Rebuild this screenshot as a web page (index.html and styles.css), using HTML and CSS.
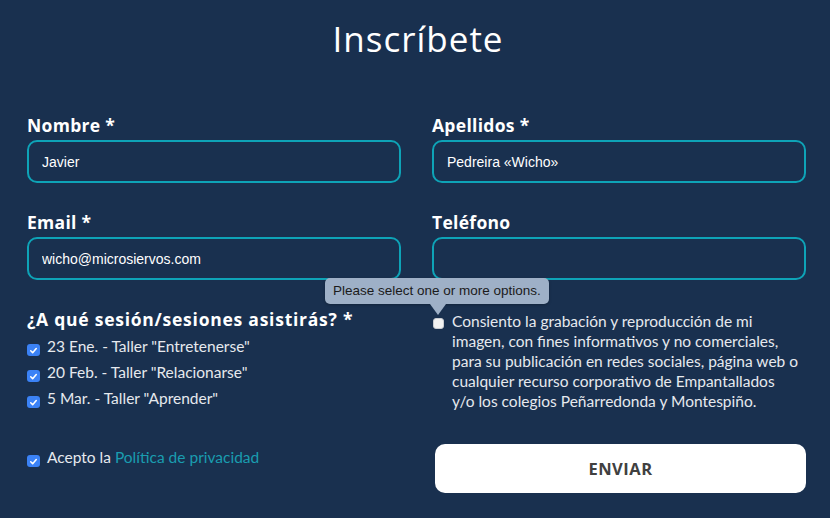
FILE: index.html
```html
<!DOCTYPE html>
<html lang="es">
<head>
<meta charset="utf-8">
<title>Inscríbete</title>
<link rel="stylesheet" href="styles.css">
</head>
<body>
<main class="form">
  <h1 class="title">Inscríbete</h1>

  <div class="grid fields">
    <div class="field">
      <label class="label">Nombre *</label>
      <input class="input" type="text" value="Javier" readonly>
    </div>
    <div class="field">
      <label class="label">Apellidos *</label>
      <input class="input" type="text" value="Pedreira «Wicho»" readonly>
    </div>
    <div class="field">
      <label class="label">Email *</label>
      <input class="input" type="text" value="wicho@microsiervos.com" readonly>
    </div>
    <div class="field">
      <label class="label">Teléfono</label>
      <input class="input" type="text" value="" readonly>
    </div>
  </div>

  <div class="grid options">
    <div class="sessions">
      <div class="heading">¿A qué sesión/sesiones asistirás? *</div>
      <ul class="checks">
        <li class="check"><span class="box on"><svg viewBox="0 0 12 12"><path d="M3 6.3 L5.1 8.4 L9 3.8" /></svg></span><span>23 Ene. - Taller "Entretenerse"</span></li>
        <li class="check"><span class="box on"><svg viewBox="0 0 12 12"><path d="M3 6.3 L5.1 8.4 L9 3.8" /></svg></span><span>20 Feb. - Taller "Relacionarse"</span></li>
        <li class="check"><span class="box on"><svg viewBox="0 0 12 12"><path d="M3 6.3 L5.1 8.4 L9 3.8" /></svg></span><span>5 Mar. - Taller "Aprender"</span></li>
      </ul>
    </div>
    <div class="consent">
      <span class="box-wrap">
        <span class="box off"></span>
        <span class="tooltip">Please select one or more options.</span>
      </span>
      <p class="consent-text">Consiento la grabación y reproducción de mi<br>imagen, con fines informativos y no comerciales,<br>para su publicación en redes sociales, página web o<br>cualquier recurso corporativo de Empantallados<br>y/o los colegios Peñarredonda y Montespiño.</p>
    </div>
  </div>

  <div class="grid footer">
    <div class="check privacy"><span class="box on"><svg viewBox="0 0 12 12"><path d="M3 6.3 L5.1 8.4 L9 3.8" /></svg></span><span>Acepto la <a class="link" href="#">Política de privacidad</a></span></div>
    <button class="submit" type="button">ENVIAR</button>
  </div>
</main>
</body>
</html>
```

FILE: styles.css
```css
* { box-sizing: border-box; }

html, body {
  margin: 0;
  padding: 0;
  background: #19304f;
}

body {
  width: 830px;
  height: 518px;
  overflow: hidden;
  font-family: "Lato", "Open Sans", sans-serif;
  color: #e6e9ee;
}

.form {
  padding: 19px 24px 0 27px;
}

.title {
  margin: 0;
  text-align: center;
  font-family: "Open Sans", sans-serif;
  font-weight: 400;
  font-size: 35px;
  letter-spacing: 1px;
  line-height: 40px;
  color: #ffffff;
  padding-left: 3px;
}

.grid {
  display: grid;
  grid-template-columns: 374px 374px;
  column-gap: 31px;
}

.fields {
  margin-top: 55px;
  row-gap: 28px;
}

.field {
  display: flex;
  flex-direction: column;
  gap: 4px;
}

.label {
  font-family: "Open Sans", sans-serif;
  font-weight: 700;
  font-size: 17.5px;
  letter-spacing: 0.3px;
  line-height: 22px;
  color: #ffffff;
}

.input {
  height: 43px;
  width: 100%;
  border: 2px solid #0ea3b7;
  border-radius: 10px;
  background: transparent;
  padding: 0 13px;
  font-family: "Liberation Sans", Arial, sans-serif;
  font-size: 14px;
  color: #ffffff;
  outline: none;
}

.options {
  margin-top: 28px;
}

.heading {
  font-family: "Open Sans", sans-serif;
  font-weight: 700;
  font-size: 17.5px;
  letter-spacing: 0.75px;
  line-height: 22px;
  color: #ffffff;
  white-space: nowrap;
}

.checks {
  list-style: none;
  margin: 3px 0 0;
  padding: 0;
}

.check {
  display: flex;
  align-items: flex-start;
  gap: 7px;
  font-size: 15.5px;
  line-height: 26px;
  color: #e6e9ee;
}

.check .box {
  margin-top: 11px;
}

.box {
  flex: none;
  display: inline-flex;
  align-items: center;
  justify-content: center;
  width: 13px;
  height: 12px;
  border-radius: 3px;
}

.box.on {
  background: #3b82f6;
}

.box svg {
  width: 11px;
  height: 11px;
}

.box svg path {
  fill: none;
  stroke: #ffffff;
  stroke-width: 1.7;
  stroke-linecap: round;
  stroke-linejoin: round;
}

.box.off {
  width: 11px;
  height: 11px;
  background: #f2f2f2;
  border: 1px solid #c9ccd1;
  border-radius: 3px;
}

.consent {
  display: flex;
  align-items: flex-start;
  gap: 8px;
  padding-top: 3px;
}

.box-wrap {
  position: relative;
  flex: none;
  margin-top: 7px;
  margin-left: 1px;
  display: flex;
}

.tooltip {
  position: absolute;
  left: -108px;
  top: -40px;
  width: 224px;
  height: 26px;
  padding: 0 8px;
  background: #9eb0c7;
  border-radius: 5px;
  font-family: "Liberation Sans", Arial, sans-serif;
  font-size: 13.5px;
  line-height: 26px;
  color: #1b1b1b;
  white-space: nowrap;
  box-shadow: 0 1px 3px rgba(0, 0, 0, 0.25);
}

.tooltip::after {
  content: "";
  position: absolute;
  left: 105px;
  top: 26px;
  border-left: 8px solid transparent;
  border-right: 8px solid transparent;
  border-top: 11px solid #9eb0c7;
}

.consent-text {
  margin: 0;
  white-space: nowrap;
  font-size: 15.5px;
  line-height: 20px;
  color: #e6e9ee;
}

.footer {
  margin-top: 33px;
  align-items: start;
}

.privacy {
  line-height: 22px;
  padding-top: 2px;
}

.privacy .box {
  margin-top: 9px;
}

.link {
  color: #1a9db0;
  text-decoration: none;
}

.submit {
  margin-left: 3px;
  width: 371px;
  height: 49px;
  border: none;
  border-radius: 10px;
  background: #ffffff;
  font-family: "Open Sans", sans-serif;
  font-weight: 700;
  font-size: 16.5px;
  letter-spacing: 0.5px;
  color: #404040;
  cursor: pointer;
}
```
